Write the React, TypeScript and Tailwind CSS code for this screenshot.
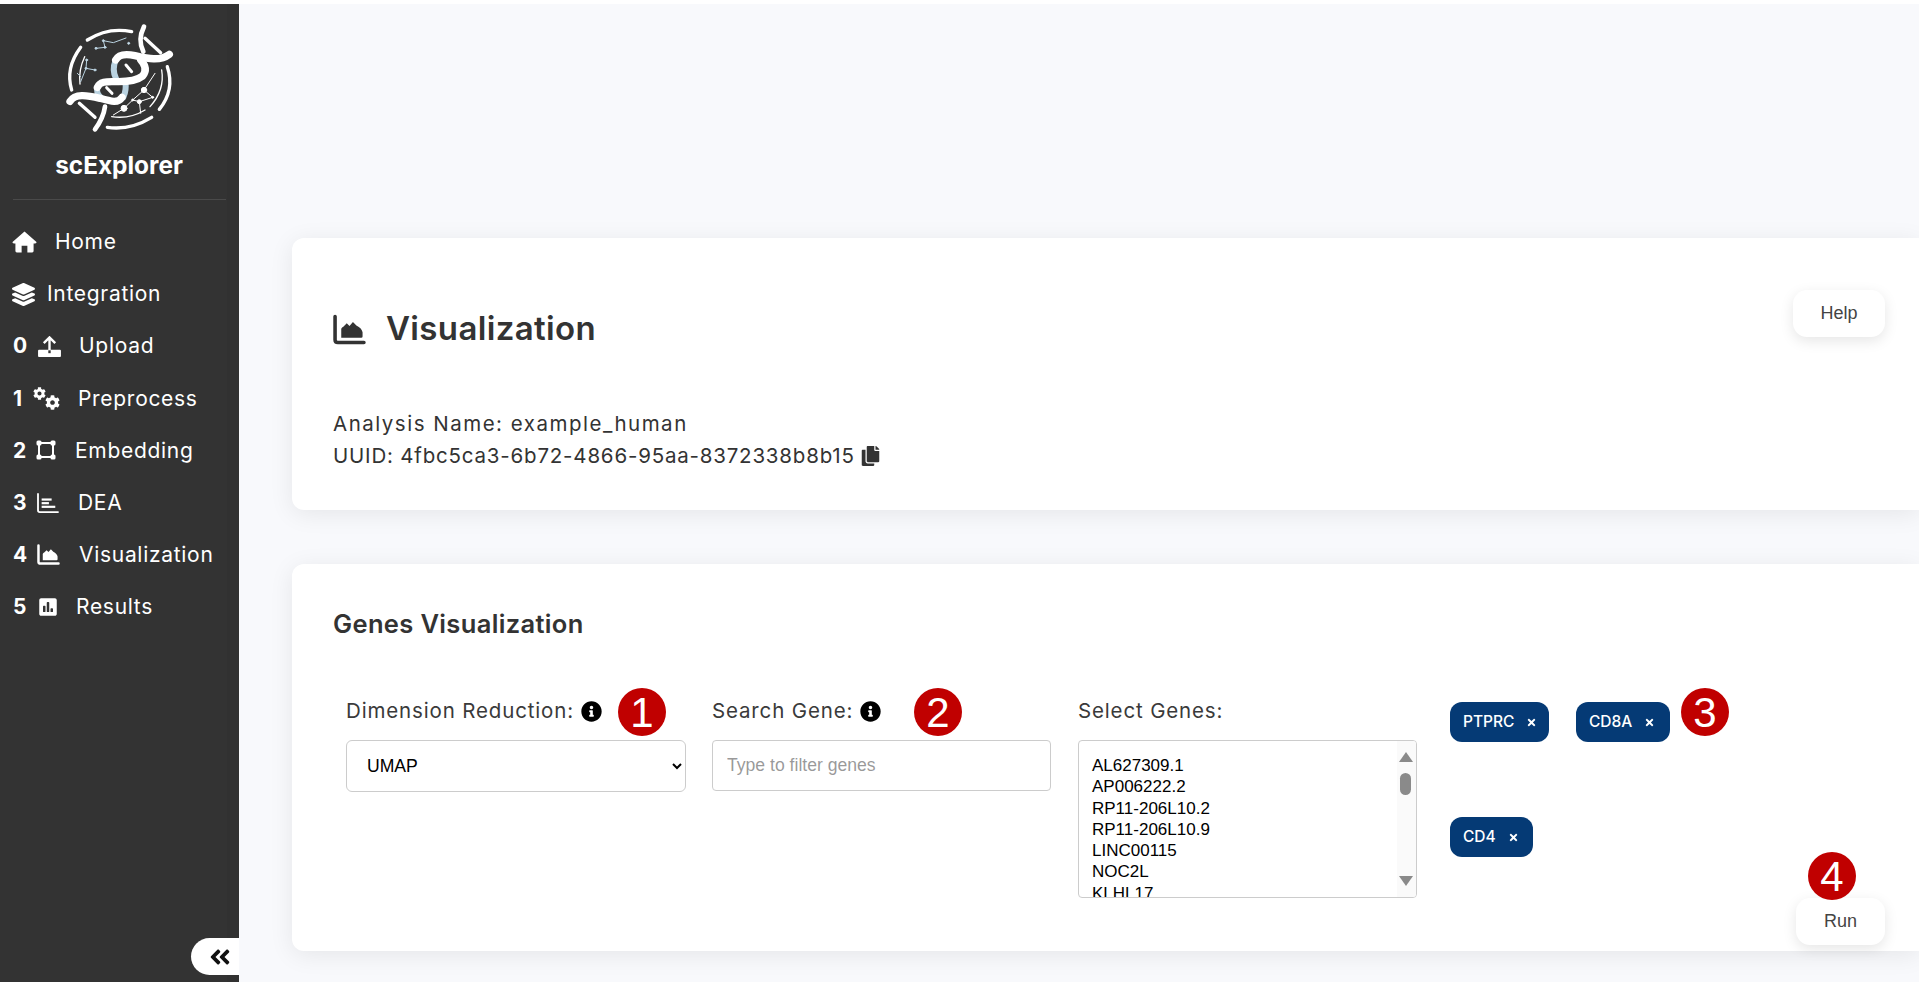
import { FaAngleDoubleLeft, FaCog, FaCopy, FaInfoCircle, FaLayerGroup, FaPoll, FaTimes } from "react-icons/fa";

const Logo = () => (
  <svg viewBox="0 0 420 390" className="w-[140px] h-[130px]" fill="none" strokeLinecap="round">
    <g stroke="#fff" strokeWidth="10">
      <path d="M112 90 Q175 50 245 65" />
      <path d="M92 112 Q45 175 65 240" />
      <path d="M305 322 Q240 362 172 352" />
      <path d="M352 170 Q375 240 328 298" />
      <path d="M285 85 L332 128" />
      <path d="M88 280 L135 322" />
    </g>
    <g stroke="#fff" strokeWidth="4">
      <path d="M104 140 Q85 180 90 222" />
      <path d="M335 180 Q345 240 300 290" />
      <path d="M185 320 Q240 328 285 300" />
    </g>
    <g stroke="#b9d2e0" strokeWidth="3" fill="#d6e4ec">
      <path d="M138 115 L165 112 L160 92 L190 98 L228 84" fill="none" />
      <circle cx="138" cy="115" r="3" />
      <circle cx="165" cy="112" r="3" />
      <circle cx="160" cy="92" r="3" />
      <circle cx="236" cy="100" r="3" />
      <path d="M110 150 L108 175 L135 180 M108 175 L92 215 M92 200 L82 190" fill="none" />
      <circle cx="110" cy="150" r="3" />
      <circle cx="108" cy="175" r="3" />
      <circle cx="135" cy="180" r="3" />
    </g>
    <g stroke="#fff" strokeWidth="3" fill="#fff">
      <path d="M222 295 L248 270 L282 240 L315 190 M282 240 L308 262 L268 275 L248 270 M268 275 L272 310 M222 295 L190 315" fill="none" />
      <circle cx="222" cy="295" r="9" />
      <circle cx="282" cy="240" r="8" />
      <circle cx="268" cy="275" r="6" />
      <circle cx="248" cy="270" r="3" />
      <circle cx="308" cy="262" r="3" />
    </g>
    <path d="M282 50 Q262 90 280 125 M165 290 Q160 325 135 358" stroke="#fff" strokeWidth="14" />
    <path d="M197 150 Q185 180 198 205 M220 262 Q230 240 226 215 M142 232 Q138 250 152 262" stroke="#b9d2e0" strokeWidth="18" />
    <path d="M228 165 L245 185 M170 233 L186 250" stroke="#fff" strokeWidth="9" />
    <g stroke="#fff" strokeWidth="22">
      <path d="M358 133 C330 155 290 145 255 137 C225 130 205 135 197 150" />
      <path d="M272 150 Q296 175 278 198 Q255 216 200 215 C175 215 150 212 142 232" />
      <path d="M60 274 C75 250 110 255 150 265 C185 275 205 280 216 262" />
    </g>
  </svg>
);

const HomeIcon = ({ className }: { className: string }) => (
  <svg viewBox="0 0 26 23" className={className} fill="currentColor">
    <path d="M13 0.5 L25.5 11.5 Q26 13 24 13 L22.5 13 L22.5 21 Q22.5 22.5 21 22.5 L16 22.5 L16 15.5 L10 15.5 L10 22.5 L5 22.5 Q3.5 22.5 3.5 21 L3.5 13 L2 13 Q0 13 0.5 11.5 Z" />
  </svg>
);

const UploadIcon = ({ className }: { className: string }) => (
  <svg viewBox="0 0 24 22" className={className}>
    <path d="M0 15.5 Q0 14.5 1 14.5 L23 14.5 Q24 14.5 24 15.5 L24 21 Q24 22 23 22 L1 22 Q0 22 0 21 Z" fill="currentColor" />
    <path d="M12 17 L12 1.5 M6 7.5 L12 1.5 L18 7.5" fill="none" stroke="currentColor" strokeWidth="2.5" />
    <path d="M12 18 L12 15" stroke="#333" strokeWidth="2.5" />
  </svg>
);

const CogsIcon = () => (
  <span className="relative block w-[27px] h-[23px]">
    <FaCog className="absolute left-0 top-0 w-[13px] h-[13px]" />
    <FaCog className="absolute right-0 bottom-0 w-[15px] h-[15px]" />
  </span>
);

const EmbedIcon = ({ className }: { className: string }) => (
  <svg viewBox="0 0 20 20" className={className} fill="currentColor">
    <rect x="3" y="3" width="14" height="14" fill="none" stroke="currentColor" strokeWidth="2" />
    <rect x="0.5" y="0.5" width="5" height="5" rx="1.5" />
    <rect x="14.5" y="0.5" width="5" height="5" rx="1.5" />
    <rect x="0.5" y="14.5" width="5" height="5" rx="1.5" />
    <rect x="14.5" y="14.5" width="5" height="5" rx="1.5" />
  </svg>
);

const BarsIcon = ({ className }: { className: string }) => (
  <svg viewBox="0 0 24 22" className={className} fill="currentColor">
    <path d="M1 1 L1 19 Q1 21 3 21 L23 21" fill="none" stroke="currentColor" strokeWidth="2" strokeLinecap="round" />
    <rect x="5" y="6" width="11" height="2.4" />
    <rect x="5" y="10" width="8" height="2.4" />
    <rect x="5" y="14" width="15" height="2.4" />
  </svg>
);

const AreaIcon = ({ className }: { className: string }) => (
  <svg viewBox="0 0 24 22" className={className} fill="currentColor">
    <path d="M1.5 1.5 L1.5 18.5 Q1.5 20.5 3.5 20.5 L22.5 20.5" fill="none" stroke="currentColor" strokeWidth="2.6" strokeLinecap="round" />
    <path d="M6 17 L6 10.5 Q6.5 9.5 7.5 9 L10 6.5 L12 8.5 L14.5 5.5 L17 8 Q21 10 21.5 13 L21.5 16 Q21.5 17 20.5 17 Z" />
  </svg>
);

const navItems = [
  { num: "", icon: <HomeIcon className="w-[25px] h-[22px]" />, label: "Home", gap: "ml-[18px]", iconGap: "-ml-[1px]" },
  { num: "", icon: <FaLayerGroup className="w-[23px] h-[23px]" />, label: "Integration", gap: "ml-[12px]", iconGap: "-ml-[1px]" },
  { num: "0", icon: <UploadIcon className="w-[23px] h-[21px]" />, label: "Upload", gap: "ml-[18px]", iconGap: "ml-[13px]" },
  { num: "1", icon: <CogsIcon />, label: "Preprocess", gap: "ml-[18px]", iconGap: "ml-[8px]" },
  { num: "2", icon: <EmbedIcon className="w-[20px] h-[20px]" />, label: "Embedding", gap: "ml-[19px]", iconGap: "ml-[11px]" },
  { num: "3", icon: <BarsIcon className="w-[22px] h-[20px]" />, label: "DEA", gap: "ml-[19px]", iconGap: "ml-[12px]" },
  { num: "4", icon: <AreaIcon className="w-[23px] h-[21px]" />, label: "Visualization", gap: "ml-[19px]", iconGap: "ml-[12px]" },
  { num: "5", icon: <FaPoll className="w-[20px] h-[20px]" />, label: "Results", gap: "ml-[18px]", iconGap: "ml-[13px]" },
];

const genes = ["AL627309.1", "AP006222.2", "RP11-206L10.2", "RP11-206L10.9", "LINC00115", "NOC2L", "KLHL17"];

const Marker = ({ n, className }: { n: string; className: string }) => (
  <div
    className={`absolute w-[48px] h-[48px] rounded-full bg-[#c00000] text-white flex items-center justify-center text-[42px] font-['Liberation_Sans',sans-serif] ${className}`}
  >
    {n}
  </div>
);

const Chip = ({ label, w }: { label: string; w: string }) => (
  <div className={`h-[40px] ${w} rounded-[12px] bg-[#053a75] text-white flex items-center pl-[13px] text-[15.5px] font-medium`}>
    {label}
    <FaTimes className="ml-[12px] w-[11px] h-[11px]" />
  </div>
);

const FieldLabel = ({ text, info }: { text: string; info?: boolean }) => (
  <div className="h-[30px] flex items-center text-[20.5px] tracking-[0.85px] text-[#3a3a3a]">
    {text}
    {info && <FaInfoCircle className="ml-[7px] w-[21px] h-[21px] text-black" />}
  </div>
);

export default function App() {
  return (
    <div className="h-[987px] w-full bg-white pt-[4px] pb-[5px] overflow-hidden font-['Inter',sans-serif]">
      <div className="flex h-full bg-[#f8f9fc]">
        <aside className="relative w-[239px] shrink-0 bg-[#333333] text-white">
          <div className="absolute right-0 top-0 bottom-0 w-[12px] bg-[#313131]" />
          <div className="relative pl-[50px] pt-[6px]">
            <Logo />
          </div>
          <div className="relative mt-[3px] text-center text-[24.4px] font-bold pr-[1px] leading-[44px]">scExplorer</div>
          <div className="relative mx-[13px] mt-[12px] h-[1px] bg-[#4a4a4a]" />
          <nav className="relative mt-[16px] pl-[13px]">
            {navItems.map((item) => (
              <div key={item.label} className="h-[52.1px] flex items-center text-[21px] tracking-[0.7px]">
                {item.num && <span className="font-bold w-[12px]">{item.num}</span>}
                <span className={item.iconGap}>{item.icon}</span>
                <span className={item.gap}>{item.label}</span>
              </div>
            ))}
          </nav>
          <button className="absolute right-0 bottom-[7px] w-[48px] h-[37px] bg-white rounded-l-full flex items-center justify-end pr-[8px] text-[#111]">
            <FaAngleDoubleLeft className="w-[22px] h-[24px]" />
          </button>
        </aside>

        <main className="flex-1 min-w-0 pl-[53px] pt-[234px] flex flex-col gap-[54px]">
          <section className="relative h-[272px] bg-white rounded-l-[12px] shadow-[0_4px_24px_rgba(0,0,0,0.08)] pl-[41px] pt-[72px] text-[#333]">
            <div className="flex items-center h-[38px]">
              <AreaIcon className="w-[33px] h-[31px]" />
              <h1 className="ml-[20px] text-[33px] tracking-[0.35px] font-semibold">Visualization</h1>
            </div>
            <div className="mt-[60px] text-[20.5px] leading-[32px]">
              <div className="tracking-[1.5px]">Analysis Name: example_human</div>
              <div className="flex items-center tracking-[0.8px]">
                UUID: 4fbc5ca3-6b72-4866-95aa-8372338b8b15
                <FaCopy className="ml-[6px] w-[19px] h-[20px]" />
              </div>
            </div>
            <button className="absolute right-[34px] top-[52px] w-[92px] h-[47px] rounded-[14px] bg-white shadow-[0_4px_14px_rgba(0,0,0,0.1)] text-[18px] text-[#444] font-['Liberation_Sans',sans-serif]">
              Help
            </button>
          </section>

          <section className="relative h-[387px] bg-white rounded-l-[12px] shadow-[0_4px_24px_rgba(0,0,0,0.08)] pl-[41px] pt-[43px] text-[#333]">
            <h2 className="text-[25.5px] tracking-[0.35px] font-semibold leading-[34px]">Genes Visualization</h2>
            <div className="mt-[55px] ml-[13px] flex">
              <div className="w-[340px]">
                <FieldLabel text="Dimension Reduction:" info />
                <select className="w-full h-[52px] mt-[14px] border border-[#ccc] rounded-[6px] pl-[16px] pr-[9px] text-[17.6px] text-black font-['Liberation_Sans',sans-serif] bg-white">
                  <option>UMAP</option>
                </select>
              </div>
              <div className="w-[339px] ml-[26px]">
                <FieldLabel text="Search Gene:" info />
                <input
                  className="w-full h-[51px] mt-[14px] border border-[#ccc] rounded-[4px] px-[14px] text-[17.6px] font-['Liberation_Sans',sans-serif] outline-none"
                  placeholder="Type to filter genes"
                />
              </div>
              <div className="w-[339px] ml-[27px]">
                <FieldLabel text="Select Genes:" />
                <div className="relative h-[158px] mt-[14px] border border-[#ccc] rounded-[4px] overflow-hidden pl-[13px] pt-[14px] text-[17px] leading-[21.3px] text-black font-['Liberation_Sans',sans-serif]">
                  {genes.map((g) => (
                    <div key={g}>{g}</div>
                  ))}
                  <div className="absolute right-0 top-0 bottom-0 w-[19px] bg-[#fafafa]">
                    <div className="absolute left-[2px] top-[11px] w-0 h-0 border-x-[7px] border-x-transparent border-b-[10px] border-b-[#8a8a8a]" />
                    <div className="absolute left-[3px] top-[32px] w-[11px] h-[22px] rounded-full bg-[#8a8a8a]" />
                    <div className="absolute left-[2px] bottom-[11px] w-0 h-0 border-x-[7px] border-x-transparent border-t-[10px] border-t-[#8a8a8a]" />
                  </div>
                </div>
              </div>
              <div className="ml-[33px] pt-[6px] flex flex-col gap-[75px]">
                <div className="flex gap-[27px]">
                  <Chip label="PTPRC" w="w-[99px]" />
                  <Chip label="CD8A" w="w-[94px]" />
                </div>
                <Chip label="CD4" w="w-[83px]" />
              </div>
            </div>
            <button className="absolute right-[34px] bottom-[6px] w-[89px] h-[47px] rounded-[14px] bg-white shadow-[0_4px_14px_rgba(0,0,0,0.1)] text-[18px] text-[#444] font-['Liberation_Sans',sans-serif]">
              Run
            </button>
            <Marker n="1" className="left-[326px] top-[124px]" />
            <Marker n="2" className="left-[622px] top-[124px]" />
            <Marker n="3" className="left-[1389px] top-[124px]" />
            <Marker n="4" className="left-[1516px] top-[288px]" />
          </section>
        </main>
      </div>
    </div>
  );
}
